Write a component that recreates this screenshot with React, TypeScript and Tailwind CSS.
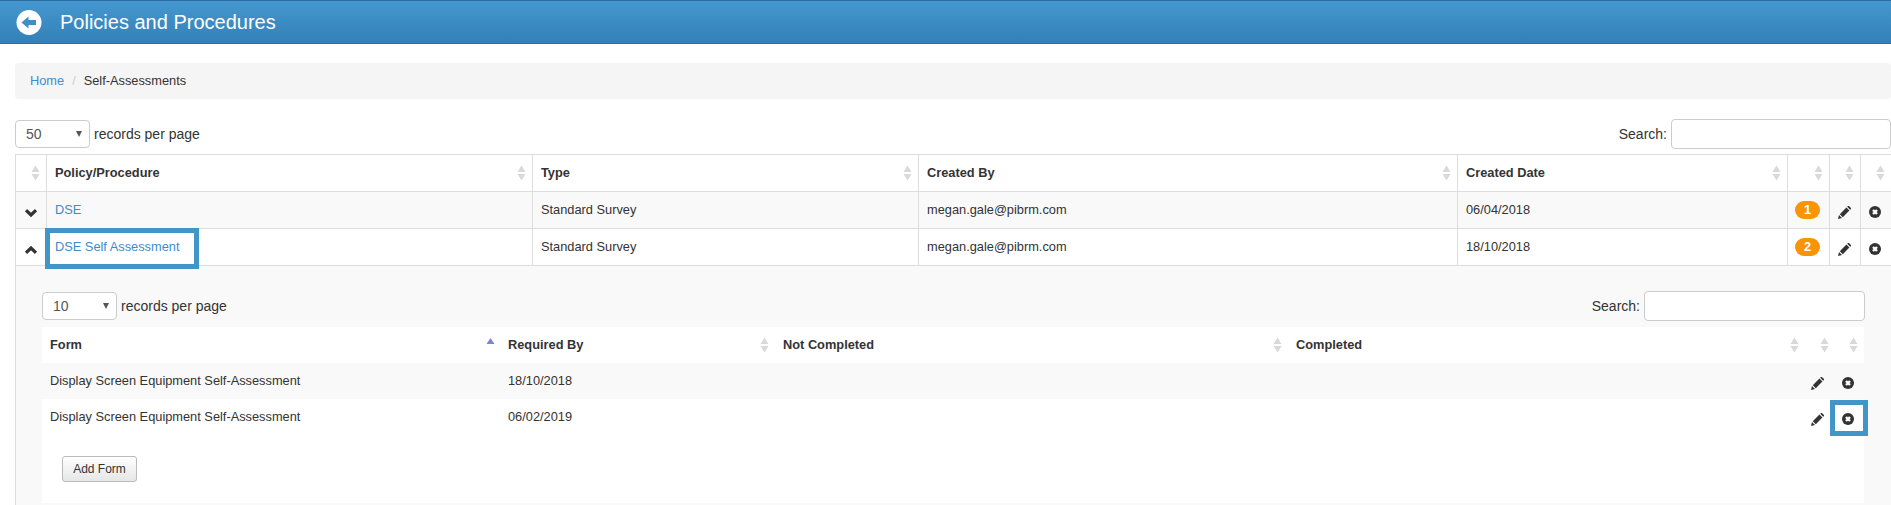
function SortIcon({ active }: { active?: boolean }) {
  if (active) {
    return (
      <svg width="9" height="16" viewBox="0 0 9 16" className="absolute right-[5px] top-[10px]">
        <path d="M4.5 1 L8.5 7 L0.5 7 Z" fill="#7b83dc" />
      </svg>
    );
  }
  return (
    <svg width="9" height="16" viewBox="0 0 9 16" className="absolute right-[6px] top-1/2 -translate-y-1/2">
      <path d="M4.5 0.5 L8.5 7 L0.5 7 Z M4.5 15.5 L8.5 9 L0.5 9 Z" fill="#d9d9d9" />
    </svg>
  );
}

function BackIcon() {
  return (
    <svg width="26" height="25" viewBox="0 0 26 25">
      <circle cx="13" cy="12.5" r="12.5" fill="#fff" />
      <path d="M5.5 12.5 L12.5 6.5 L12.5 10 L20 10 L20 15 L12.5 15 L12.5 18.5 Z" fill="#3d8fc6" />
    </svg>
  );
}

function PencilIcon() {
  return (
    <svg width="13" height="13" viewBox="0 0 13 13" className="mt-[4px] block">
      <path d="M0 13 L1 9 L4 12 Z M1.8 8.2 L8.4 1.6 L11.4 4.6 L4.8 11.2 Z M9.2 0.8 L10 0 Q10.6 -0.2 11.2 0.3 L12.7 1.8 Q13.2 2.4 13 3 L12.2 3.8 Z" fill="#333" />
    </svg>
  );
}

function RemoveIcon() {
  return (
    <svg width="12" height="12" viewBox="0 0 12 12" className="mt-[4px] block">
      <circle cx="6" cy="6" r="6" fill="#333" />
      <path d="M4 4 L8 8 M8 4 L4 8" stroke="#fff" strokeWidth="2.4" />
    </svg>
  );
}

function Chevron({ up }: { up: boolean }) {
  return (
    <svg width="12" height="8" viewBox="0 0 12 8" className="mt-[5px] block">
      <path d={up ? "M1 6.8 L6 2 L11 6.8" : "M1 1.2 L6 6 L11 1.2"} fill="none" stroke="#333" strokeWidth="3.2" />
    </svg>
  );
}

function PageSize({ value }: { value: string }) {
  return (
    <div className="flex items-center gap-[4px]">
      <div className="flex h-[28px] w-[75px] items-center justify-between rounded-[4px] border border-[#ccc] bg-white pl-[10px] pr-[7px] text-[14px] text-[#555]">
        <span>{value}</span>
        <svg width="6" height="6" viewBox="0 0 6 6">
          <path d="M0 0 H6 L3 6 Z" fill="#555" />
        </svg>
      </div>
      <span className="text-[14px] text-[#333]">records per page</span>
    </div>
  );
}

function SearchBox({ width }: { width: string }) {
  return (
    <div className="flex items-center gap-[4px]">
      <span className="text-[14px] text-[#333]">Search:</span>
      <div className={`${width} h-[30px] rounded-[4px] border border-[#ccc] bg-white`} />
    </div>
  );
}

const outerHeads = ["", "Policy/Procedure", "Type", "Created By", "Created Date", "", "", ""];

const outerRows = [
  { name: "DSE", date: "06/04/2018", count: "1", open: false },
  { name: "DSE Self Assessment", date: "18/10/2018", count: "2", open: true },
];

const innerHeads = ["Form", "Required By", "Not Completed", "Completed", "", ""];

const innerRows = [
  { date: "18/10/2018", mark: false },
  { date: "06/02/2019", mark: true },
];

export default function App() {
  return (
    <div className="h-[505px] w-[1891px] overflow-hidden bg-white font-['Liberation_Sans',Arial,sans-serif] text-[12.8px] text-[#333]">
      <div className="flex h-[44px] items-center border-y border-[#2e6da4] bg-gradient-to-b from-[#4598cf] to-[#3380b8] pl-[16px]">
        <BackIcon />
        <h1 className="ml-[18px] text-[20px] leading-none text-white">Policies and Procedures</h1>
      </div>

      <div className="ml-[15px] mt-[19px] flex h-[36px] items-center rounded-[4px] bg-[#f5f5f5] px-[15px]">
        <a className="text-[#428bca]">Home</a>
        <span className="px-[8px] text-[#ccc]">/</span>
        <span>Self-Assessments</span>
      </div>

      <div className="ml-[15px] mt-[20px] flex h-[30px] items-center justify-between">
        <PageSize value="50" />
        <SearchBox width="w-[220px]" />
      </div>

      <table className="ml-[15px] mt-[5px] w-[1876px] table-fixed border-collapse border border-[#ddd]">
        <colgroup>
          <col className="w-[31px]" />
          <col className="w-[486px]" />
          <col className="w-[386px]" />
          <col className="w-[539px]" />
          <col className="w-[330px]" />
          <col className="w-[42px]" />
          <col className="w-[31px]" />
          <col className="w-[31px]" />
        </colgroup>
        <thead>
          <tr className="h-[37px]">
            {outerHeads.map((h, i) => (
              <th key={i} className="relative border border-[#ddd] px-[8px] text-left font-bold">
                {h}
                <SortIcon />
              </th>
            ))}
          </tr>
        </thead>
        <tbody>
          {outerRows.map((r) => (
            <tr key={r.name} className={`h-[37px] ${r.open ? "bg-white" : "bg-[#f9f9f9]"}`}>
              <td className="border border-[#ddd] px-[9px]">
                <Chevron up={r.open} />
              </td>
              <td className="relative border border-[#ddd] px-[8px]">
                <a className="text-[#428bca]">{r.name}</a>
                {r.open && <div className="absolute left-[-2px] top-[-1px] h-[41px] w-[154px] border-[5px] border-[#4195c9]" />}
              </td>
              <td className="border border-[#ddd] px-[8px]">Standard Survey</td>
              <td className="border border-[#ddd] px-[8px]">megan.gale@pibrm.com</td>
              <td className="border border-[#ddd] px-[8px]">{r.date}</td>
              <td className="border border-[#ddd] px-[7px]">
                <span className="flex h-[18px] w-[25px] items-center justify-center rounded-full bg-[#f89406] font-bold text-white">
                  {r.count}
                </span>
              </td>
              <td className="border border-[#ddd] px-[8px]">
                <PencilIcon />
              </td>
              <td className="border border-[#ddd] px-[8px]">
                <RemoveIcon />
              </td>
            </tr>
          ))}
          <tr className="bg-[#f9f9f9]">
            <td colSpan={8} className="h-[240px] border-x border-[#ddd] px-[26px] pt-[24px] align-top">
              <div className="flex h-[32px] items-center justify-between">
                <PageSize value="10" />
                <SearchBox width="w-[221px]" />
              </div>
              <table className="mt-[5px] w-[1822px] table-fixed border-collapse">
                <colgroup>
                  <col className="w-[458px]" />
                  <col className="w-[275px]" />
                  <col className="w-[513px]" />
                  <col className="w-[517px]" />
                  <col className="w-[30px]" />
                  <col className="w-[29px]" />
                </colgroup>
                <thead>
                  <tr className="h-[36px] bg-white">
                    {innerHeads.map((h, i) => (
                      <th key={i} className="relative px-[8px] text-left font-bold">
                        {h}
                        <SortIcon active={i === 0} />
                      </th>
                    ))}
                  </tr>
                </thead>
                <tbody>
                  {innerRows.map((r) => (
                    <tr key={r.date} className={`h-[36px] ${r.mark ? "bg-white" : "bg-[#f9f9f9]"}`}>
                      <td className="px-[8px]">Display Screen Equipment Self-Assessment</td>
                      <td className="px-[8px]">{r.date}</td>
                      <td />
                      <td />
                      <td className="px-[6px]">
                        <PencilIcon />
                      </td>
                      <td className="relative px-[7px]">
                        <RemoveIcon />
                        {r.mark && <div className="absolute left-[-5px] top-[1px] h-[36px] w-[38px] border-[5px] border-[#4195c9]" />}
                      </td>
                    </tr>
                  ))}
                </tbody>
              </table>
              <div className="h-[68px] w-[1822px] bg-white pl-[20px] pt-[21px]">
                <button className="h-[26px] w-[75px] rounded-[3px] border border-[#bbb] bg-gradient-to-b from-white to-[#e6e6e6] text-[12px] text-[#333]">
                  Add Form
                </button>
              </div>
            </td>
          </tr>
        </tbody>
      </table>
    </div>
  );
}
